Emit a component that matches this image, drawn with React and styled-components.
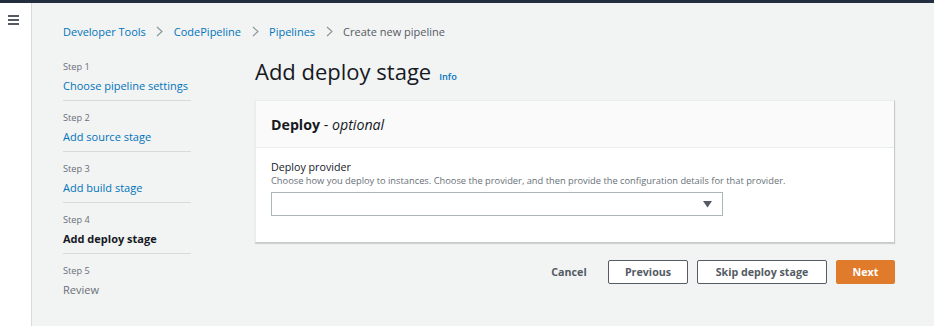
import React from "react";
import styled, { createGlobalStyle } from "styled-components";

const Global = createGlobalStyle`
  html, body { margin: 0; padding: 0; }
  body {
    font-family: "Open Sans", "Liberation Sans", Arial, sans-serif;
    background: #f2f3f3;
    color: #16191f;
    -webkit-font-smoothing: antialiased;
  }
  * { box-sizing: border-box; }
`;

const Page = styled.div`
  width: 934px;
  height: 326px;
  display: flex;
  flex-direction: column;
  overflow: hidden;
`;

const TopBar = styled.div`
  height: 3px;
  background: #232f3e;
  flex: none;
`;

const Body = styled.div`
  flex: 1;
  display: flex;
`;

const NavRail = styled.div`
  width: 32px;
  background: #ffffff;
  border-right: 1px solid #d5dbdb;
  display: flex;
  justify-content: center;
  padding-top: 12px;
  padding-right: 1px;
  flex: none;
`;

const Burger = styled.div`
  width: 11px;
  display: flex;
  flex-direction: column;
  gap: 2.5px;
  margin-left: -4px;
  span {
    display: block;
    height: 1.5px;
    background: #545b64;
  }
`;

const Main = styled.div`
  flex: 1;
  padding: 19px 39px 0 31px;
  display: flex;
  flex-direction: column;
`;

const Crumbs = styled.nav`
  display: flex;
  align-items: center;
  font-size: 11px;
  height: 18px;
`;

const Crumb = styled.span`
  color: ${(p) => (p.$current ? "#545b64" : "#0073bb")};
`;

const Sep = styled.span`
  display: inline-flex;
  width: 28px;
  justify-content: center;
`;

const Columns = styled.div`
  display: flex;
  margin-top: 16px;
`;

const Steps = styled.ol`
  list-style: none;
  margin: 0;
  padding: 0;
  width: 128px;
  flex: none;
  margin-right: 64px;
`;

const Step = styled.li`
  display: flex;
  flex-direction: column;
  padding: 10px 0 5px;
  height: 51px;
  border-bottom: ${(p) => (p.$last ? "none" : "1px solid #d5dbdb")};
  &:first-child {
    padding-top: 4px;
    height: 45px;
  }
`;

const StepNum = styled.span`
  font-size: 9.2px;
  color: #687078;
  line-height: 14px;
`;

const StepName = styled.span`
  font-size: 11px;
  line-height: 16px;
  margin-top: 4px;
  white-space: nowrap;
  color: ${(p) => (p.$state === "active" ? "#16191f" : p.$state === "disabled" ? "#687078" : "#0073bb")};
  font-weight: ${(p) => (p.$state === "active" ? 700 : 400)};
`;

const Content = styled.div`
  flex: 1;
  display: flex;
  flex-direction: column;
`;

const TitleRow = styled.div`
  display: flex;
  align-items: baseline;
  gap: 8px;
  height: 44px;
`;

const Title = styled.h1`
  margin: 0;
  font-size: 22px;
  font-weight: 400;
  line-height: 30px;
  color: #16191f;
`;

const Info = styled.span`
  font-size: 9.2px;
  font-weight: 600;
  color: #0073bb;
`;

const Card = styled.section`
  background: #ffffff;
  border: 1px solid #eaeded;
  border-right-color: #c6cccc;
  border-bottom-color: #c6cccc;
  box-shadow: 0 1px 1px rgba(0, 28, 36, 0.15);
`;

const CardHeader = styled.header`
  background: #fafafa;
  border-bottom: 1px solid #eaeded;
  height: 47px;
  display: flex;
  align-items: center;
  padding: 0 15px;
  font-size: 14.2px;
`;

const Bold = styled.strong`
  font-weight: 700;
`;

const Optional = styled.em`
  font-style: italic;
  font-weight: 400;
`;

const CardBody = styled.div`
  padding: 11px 15px 26px;
  display: flex;
  flex-direction: column;
`;

const Label = styled.label`
  font-size: 10.7px;
  line-height: 16px;
  color: #16191f;
`;

const Hint = styled.span`
  font-size: 9.3px;
  line-height: 12px;
  color: #687078;
`;

const Select = styled.div`
  margin-top: 5px;
  width: 452px;
  height: 24px;
  border: 1px solid #aab7b8;
  background: #ffffff;
  display: flex;
  align-items: center;
  justify-content: flex-end;
  padding-right: 10px;
`;

const Actions = styled.div`
  display: flex;
  justify-content: flex-end;
  align-items: center;
  gap: 9px;
  margin-top: 17px;
`;

const Button = styled.button`
  font-family: inherit;
  font-size: 10.7px;
  font-weight: 700;
  height: 24px;
  width: ${(p) => p.$w}px;
  padding: 0;
  border-radius: 2px;
  cursor: pointer;
  border: 1px solid
    ${(p) => (p.$variant === "primary" ? "#e07b2b" : p.$variant === "link" ? "transparent" : "#545b64")};
  background: ${(p) => (p.$variant === "primary" ? "#e07b2b" : p.$variant === "link" ? "transparent" : "#ffffff")};
  color: ${(p) => (p.$variant === "primary" ? "#ffffff" : "#545b64")};
`;

const Chevron = () => (
  <svg width="7" height="11" viewBox="0 0 7 11" fill="none">
    <path d="M1 1 L6 5.5 L1 10" stroke="#879596" strokeWidth="1.1" />
  </svg>
);

const steps = [
  { n: 1, name: "Choose pipeline settings", state: "done" },
  { n: 2, name: "Add source stage", state: "done" },
  { n: 3, name: "Add build stage", state: "done" },
  { n: 4, name: "Add deploy stage", state: "active" },
  { n: 5, name: "Review", state: "disabled" },
];

export default function App() {
  return (
    <Page>
      <Global />
      <TopBar />
      <Body>
        <NavRail>
          <Burger>
            <span />
            <span />
            <span />
          </Burger>
        </NavRail>
        <Main>
          <Crumbs>
            <Crumb>Developer Tools</Crumb>
            <Sep><Chevron /></Sep>
            <Crumb>CodePipeline</Crumb>
            <Sep><Chevron /></Sep>
            <Crumb>Pipelines</Crumb>
            <Sep><Chevron /></Sep>
            <Crumb $current>Create new pipeline</Crumb>
          </Crumbs>
          <Columns>
            <Steps>
              {steps.map((s, i) => (
                <Step key={s.n} $last={i === steps.length - 1}>
                  <StepNum>Step {s.n}</StepNum>
                  <StepName $state={s.state}>{s.name}</StepName>
                </Step>
              ))}
            </Steps>
            <Content>
              <TitleRow>
                <Title>Add deploy stage</Title>
                <Info>Info</Info>
              </TitleRow>
              <Card>
                <CardHeader>
                  <Bold>Deploy</Bold>&nbsp;-&nbsp;<Optional>optional</Optional>
                </CardHeader>
                <CardBody>
                  <Label>Deploy provider</Label>
                  <Hint>
                    Choose how you deploy to instances. Choose the provider, and then provide the configuration details for that provider.
                  </Hint>
                  <Select>
                    <svg width="9" height="7" viewBox="0 0 9 7">
                      <path d="M0 0 H9 L4.5 6.5 Z" fill="#545b64" />
                    </svg>
                  </Select>
                </CardBody>
              </Card>
              <Actions>
                <Button $variant="link" $w={60}>Cancel</Button>
                <Button $w={80}>Previous</Button>
                <Button $w={130}>Skip deploy stage</Button>
                <Button $variant="primary" $w={59}>Next</Button>
              </Actions>
            </Content>
          </Columns>
        </Main>
      </Body>
    </Page>
  );
}
